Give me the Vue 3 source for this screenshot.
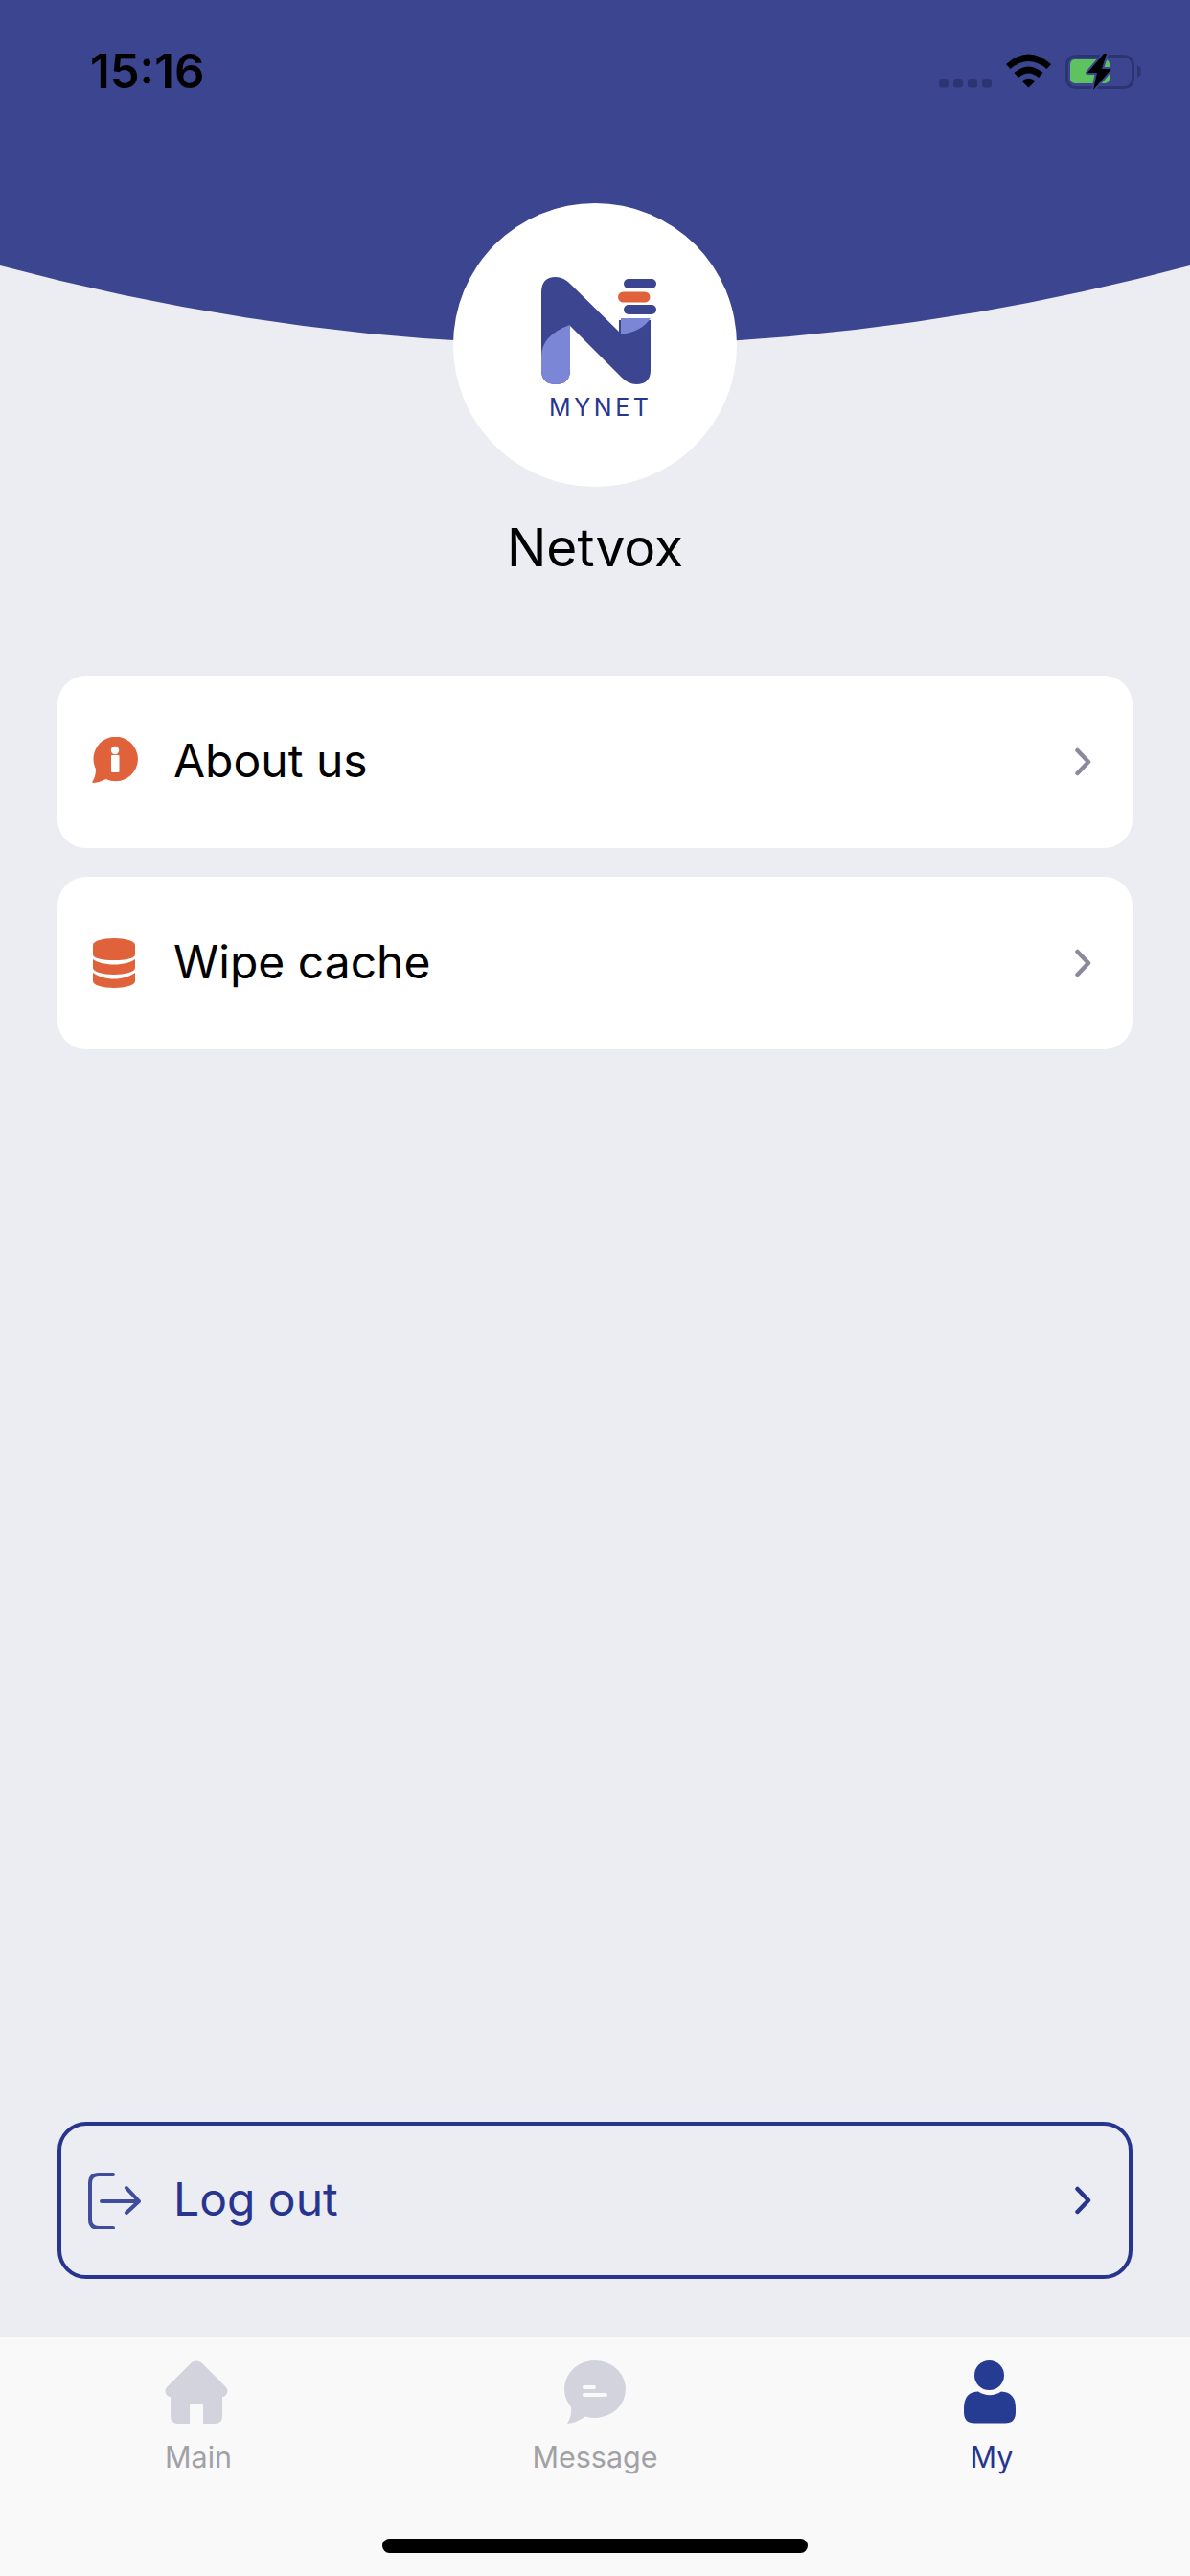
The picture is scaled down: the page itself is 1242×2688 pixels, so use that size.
<script setup>
const rows = [
  { id: 'about', label: 'About us' },
  { id: 'wipe', label: 'Wipe cache' },
]
</script>

<template>
  <div class="screen">
    <svg class="arc" viewBox="0 0 1242 360" width="1242" height="360" aria-hidden="true">
      <path d="M0 0H1242V277Q621 443 0 277Z" fill="#3b4590" />
    </svg>

    <header class="status">
      <span class="time">15:16</span>
      <div class="status-icons">
        <svg width="212" height="42" viewBox="980 54 212 42">
          <g fill="#2c3471">
            <rect x="980" y="82" width="10" height="9.500" rx="3" />
            <rect x="995" y="82" width="10" height="9.500" rx="3" />
            <rect x="1010" y="82" width="10" height="9.500" rx="3" />
            <rect x="1025" y="82" width="10" height="9.500" rx="3" />
          </g>
          <path d="M1050 67Q1073.500 46 1097 67L1092.500 72Q1073.500 56 1054.500 72ZM1058.500 76Q1073.500 63 1088.500 76L1084 81Q1073.500 72 1063 81ZM1066.500 84.500Q1073.500 79 1080.500 84.500L1073.500 91.500Z" fill="#000" />
          <rect x="1113.500" y="58.500" width="69" height="33" rx="9" fill="none" stroke="#2c3471" stroke-width="3" />
          <path d="M1187 68L1190.500 71V78L1187 81Z" fill="#2c3471" />
          <rect x="1117" y="62" width="41" height="25" rx="5" fill="#5ec25f" />
          <path d="M1152 56L1135 76H1145L1141 94L1160 72H1150L1155 56Z" fill="#000" stroke="#3b4590" stroke-width="4" stroke-linejoin="round" paint-order="stroke" />
        </svg>
      </div>
    </header>

    <div class="avatar">
      <svg viewBox="474 212 296 296" width="296" height="296">
        <path d="M566 305Q566 289 581 289Q589 289 596 296L647 346V334H680V386Q680 401 665 401Q657 401 650 394L596 340V386Q596 401 581 401Q566 401 566 386Z" fill="#3b4590" />
        <path d="M566 386V372Q566 350 595.500 339L596 340V386Q596 401 581 401Q566 401 566 386Z" fill="#7b86d6" />
        <path d="M649 332H680Q671 346 649 349Z" fill="#7b86d6" />
        <rect x="652" y="291" width="34" height="10" rx="5" fill="#3b4590" />
        <rect x="646" y="304.500" width="33.500" height="11" rx="5.500" fill="#e0623a" />
        <rect x="652" y="318" width="34" height="10" rx="5" fill="#3b4590" />
        <text class="brand" x="574" y="434" textLength="104">MYNET</text>
      </svg>
    </div>

    <h1 class="name">Netvox</h1>

    <section class="list">
      <div v-for="row in rows" :key="row.id" class="row">
        <svg v-if="row.id === 'about'" class="row-icon" viewBox="0 0 48 52" width="48" height="52">
          <path d="M24.500 -0.300A23.300 23.300 0 1 1 14.500 44Q8 47.500 1.500 48Q0 48 0.500 46.500Q4 41 4 33.500A23.300 23.300 0 0 1 24.500 -0.300Z" fill="#e0623a" />
          <circle cx="24" cy="14" r="4.200" fill="#fff" />
          <rect x="20" y="19" width="8.500" height="18" rx="1" fill="#fff" />
        </svg>
        <svg v-else class="row-icon" viewBox="-1 0 48 52" width="48" height="52">
          <path d="M0 7C0 3 10 0 22 0S44 3 44 7V17C44 21 34 23 22 23S0 21 0 17Z" fill="#e0623a" />
          <path d="M0 22C4 25 12 27.500 22 27.500S40 25 44 22V31C44 35 34 38 22 38S0 35 0 31Z" fill="#e0623a" />
          <path d="M0 36C4 39 12 42.500 22 42.500S40 39 44 36V45C44 49 34 52 22 52S0 49 0 45Z" fill="#e0623a" />
        </svg>
        <span class="row-label">{{ row.label }}</span>
        <svg class="chev" viewBox="0 0 20 30" width="20" height="30">
          <path d="M2.500 3L14 15L2.500 27" fill="none" stroke="#8a8a9c" stroke-width="4.500" stroke-linecap="round" stroke-linejoin="round" />
        </svg>
      </div>
    </section>

    <div class="spacer"></div>

    <div class="logout">
      <svg class="row-icon" viewBox="0 0 56 60" width="56" height="60">
        <path d="M27 3H12Q3 3 3 12V50Q3 59 12 59H27" fill="none" stroke="#3f4d9c" stroke-width="4" stroke-linecap="round" />
        <path d="M15 31H54M41 17L54 31L41 43" fill="none" stroke="#3f4d9c" stroke-width="4" stroke-linecap="round" stroke-linejoin="round" />
      </svg>
      <span class="row-label logout-label">Log out</span>
      <svg class="chev" viewBox="0 0 20 30" width="20" height="30">
        <path d="M2.500 3L14 15L2.500 27" fill="none" stroke="#27358f" stroke-width="4.500" stroke-linecap="round" stroke-linejoin="round" />
      </svg>
    </div>

    <nav class="tabs">
      <div class="tab">
        <svg viewBox="2 0 66 66" width="66" height="66">
          <path d="M28 2Q33 -1 38 2L63 27Q68 32 63 37Q62 38 60 38V58Q60 66 52 66H40V48Q40 45 37 45H29Q26 45 26 48V66H14Q6 66 6 58V38Q4 38 3 37Q-2 32 3 27Z" fill="#d2d3dc" />
        </svg>
        <span class="tab-label">Main</span>
      </div>
      <div class="tab">
        <svg viewBox="0 0 66 66" width="66" height="66">
          <path d="M33 0A32 30 0 1 1 23 58.500Q14 65 4 66Q9 58 8 48.700A32 30 0 0 1 33 0Z" fill="#d2d3dc" />
          <rect x="20" y="26" width="14" height="4" rx="2" fill="#f9f9f9" />
          <rect x="20" y="34" width="26" height="4" rx="2" fill="#f9f9f9" />
        </svg>
        <span class="tab-label">Message</span>
      </div>
      <div class="tab tab-active">
        <svg viewBox="2 0 66 66" width="66" height="66">
          <circle cx="32.500" cy="15.500" r="15.500" fill="#263c92" />
          <path d="M21 32.500Q33 40 45 32.500Q60 33 60 50V54Q60 65.500 49 65.500H17Q6 65.500 6 54V50Q6 33 21 32.500Z" fill="#263c92" />
        </svg>
        <span class="tab-label">My</span>
      </div>
      <div class="home-bar"></div>
    </nav>
  </div>
</template>

<style scoped>
.screen {
  position: relative;
  width: 1242px;
  height: 2688px;
  display: flex;
  flex-direction: column;
  background: #ecedf2;
  font-family: Inter, "Liberation Sans", sans-serif;
  overflow: hidden;
}
.arc {
  position: absolute;
  top: 0;
  left: 0;
}
.status {
  position: relative;
  height: 212px;
  flex: none;
}
.time {
  position: absolute;
  left: 94px;
  top: 46px;
  font-size: 49px;
  line-height: 58px;
  font-weight: 600;
  color: #000;
}
.status-icons {
  position: absolute;
  left: 980px;
  top: 54px;
  line-height: 0;
}
.avatar {
  position: relative;
  flex: none;
  align-self: center;
  width: 296px;
  height: 296px;
  border-radius: 50%;
  background: #fff;
  overflow: hidden;
}
.brand {
  font-family: Inter, "Liberation Sans", sans-serif;
  font-size: 25px;
  fill: #27358f;
}
.name {
  margin: 27px 0 0;
  text-align: center;
  font-size: 55px;
  line-height: 72px;
  font-weight: 400;
  color: #000;
}
.list {
  display: flex;
  flex-direction: column;
  gap: 30px;
  margin: 98px 60px 0;
}
.row,
.logout {
  display: flex;
  align-items: center;
  border-radius: 30px;
}
.row {
  height: 180px;
  padding: 0 40px 0 36px;
  background: #fff;
}
.row-icon {
  flex: none;
  margin-right: 37px;
}
.row-label {
  flex: 1;
  padding-bottom: 3px;
  font-size: 48px;
  color: #000;
}
.chev {
  flex: none;
}
.spacer {
  flex: 1;
}
.logout {
  height: 164px;
  margin: 0 60px 61px;
  border: 4px solid #27358f;
  box-sizing: border-box;
  padding: 0 36px 0 27px;
}
.logout .row-icon {
  margin-right: 34px;
}
.logout-label {
  color: #27358f;
}
.tabs {
  position: relative;
  flex: none;
  height: 249px;
  display: grid;
  grid-template-columns: repeat(3, 414px);
  background: #f9f9f9;
}
.tab {
  display: flex;
  flex-direction: column;
  align-items: center;
  padding-top: 24px;
  color: #a1a1a6;
}
.tab svg {
  overflow: visible;
}
.tab-label {
  margin-top: 17px;
  font-size: 30.500px;
  line-height: 36px;
}
.tab-active {
  color: #27358f;
}
.home-bar {
  position: absolute;
  left: 399px;
  top: 210px;
  width: 444px;
  height: 15px;
  border-radius: 8px;
  background: #000;
}
</style>
